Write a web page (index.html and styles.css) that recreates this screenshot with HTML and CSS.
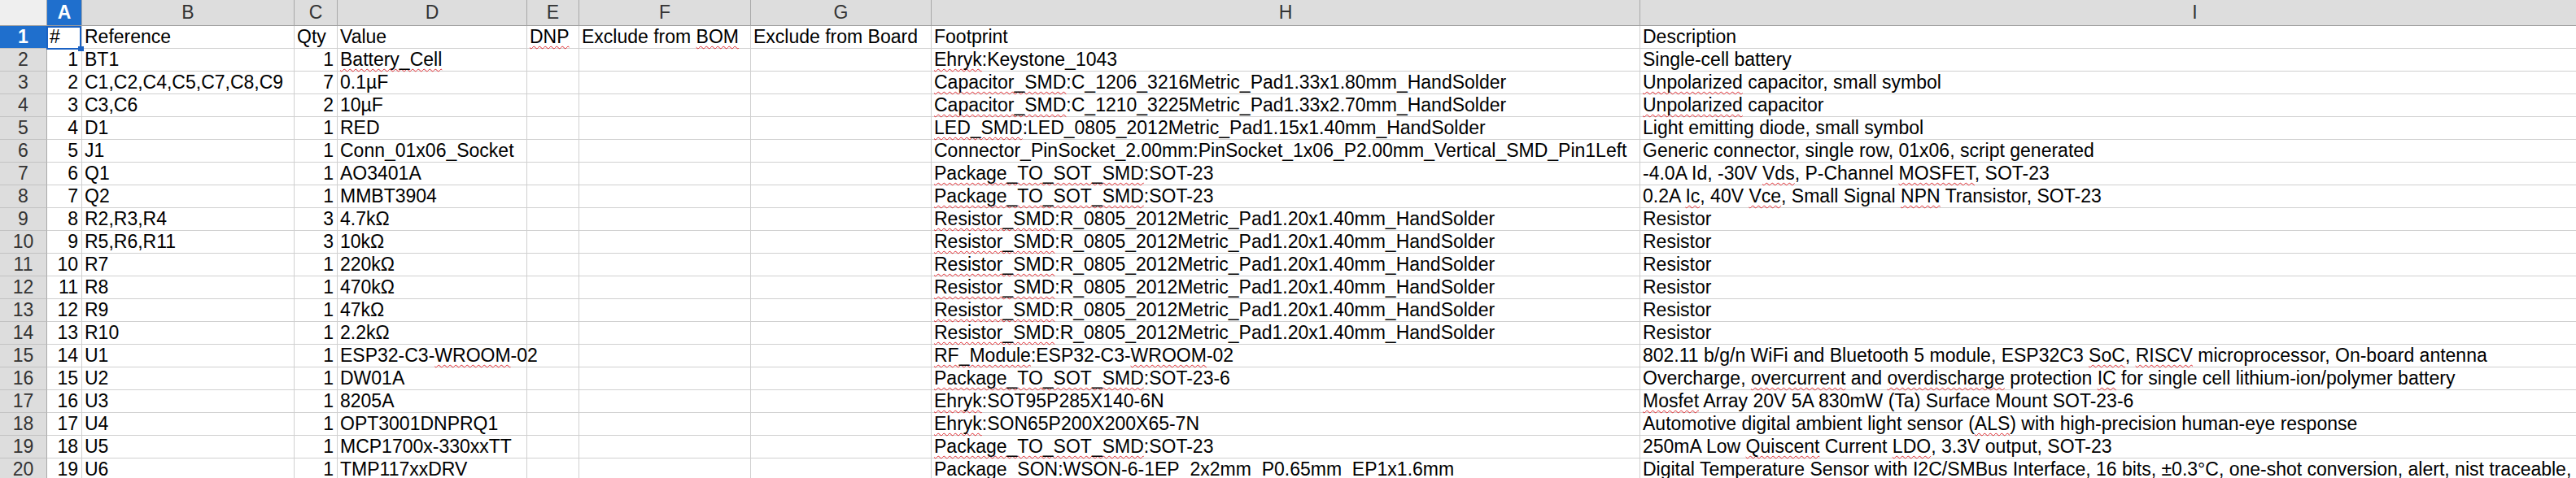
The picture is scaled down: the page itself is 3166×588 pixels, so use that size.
FILE: index.html
```html
<!DOCTYPE html>
<html lang="en">
<head>
    <meta charset="UTF-8">
    <title>bom.csv - LibreOffice Calc</title>
    <link rel="stylesheet" href="styles.css">
</head>
<body>
    <div class="sheet" id="sheet"></div>

    <script>
        const columns = ['A', 'B', 'C', 'D', 'E', 'F', 'G', 'H', 'I'];

        // words wrapped in ~ ~ get the spell checker squiggle
        const rows = [
            ['#', 'Reference', 'Qty', 'Value', '~DNP~', 'Exclude from ~BOM~', 'Exclude from Board', 'Footprint', 'Description'],
            ['1', 'BT1', '1', '~Battery_Cell~', '', '', '', '~Ehryk~:Keystone_1043', 'Single-cell battery'],
            ['2', 'C1,C2,C4,C5,C7,C8,C9', '7', '0.1µF', '', '', '', '~Capacitor_SMD~:C_1206_3216Metric_Pad1.33x1.80mm_HandSolder', '~Unpolarized~ capacitor, small symbol'],
            ['3', 'C3,C6', '2', '10µF', '', '', '', '~Capacitor_SMD~:C_1210_3225Metric_Pad1.33x2.70mm_HandSolder', '~Unpolarized~ capacitor'],
            ['4', 'D1', '1', 'RED', '', '', '', '~LED_SMD~:LED_0805_2012Metric_Pad1.15x1.40mm_HandSolder', 'Light emitting diode, small symbol'],
            ['5', 'J1', '1', 'Conn_01x06_Socket', '', '', '', 'Connector_PinSocket_2.00mm:PinSocket_1x06_P2.00mm_Vertical_SMD_Pin1Left', 'Generic connector, single row, 01x06, script generated'],
            ['6', 'Q1', '1', 'AO3401A', '', '', '', '~Package_TO_SOT_SMD~:SOT-23', '-4.0A Id, -30V ~Vds~, P-Channel ~MOSFET~, SOT-23'],
            ['7', 'Q2', '1', 'MMBT3904', '', '', '', '~Package_TO_SOT_SMD~:SOT-23', '0.2A ~Ic~, 40V ~Vce~, Small Signal ~NPN~ Transistor, SOT-23'],
            ['8', 'R2,R3,R4', '3', '4.7kΩ', '', '', '', '~Resistor_SMD~:R_0805_2012Metric_Pad1.20x1.40mm_HandSolder', 'Resistor'],
            ['9', 'R5,R6,R11', '3', '10kΩ', '', '', '', '~Resistor_SMD~:R_0805_2012Metric_Pad1.20x1.40mm_HandSolder', 'Resistor'],
            ['10', 'R7', '1', '220kΩ', '', '', '', '~Resistor_SMD~:R_0805_2012Metric_Pad1.20x1.40mm_HandSolder', 'Resistor'],
            ['11', 'R8', '1', '470kΩ', '', '', '', '~Resistor_SMD~:R_0805_2012Metric_Pad1.20x1.40mm_HandSolder', 'Resistor'],
            ['12', 'R9', '1', '47kΩ', '', '', '', '~Resistor_SMD~:R_0805_2012Metric_Pad1.20x1.40mm_HandSolder', 'Resistor'],
            ['13', 'R10', '1', '2.2kΩ', '', '', '', '~Resistor_SMD~:R_0805_2012Metric_Pad1.20x1.40mm_HandSolder', 'Resistor'],
            ['14', 'U1', '1', 'ESP32-C3-~WROOM~-02', '', '', '', '~RF_Module~:ESP32-C3-~WROOM~-02', '802.11 b/g/n WiFi and Bluetooth 5 module, ESP32C3 ~SoC~, ~RISCV~ microprocessor, On-board antenna'],
            ['15', 'U2', '1', 'DW01A', '', '', '', '~Package_TO_SOT_SMD~:SOT-23-6', 'Overcharge, ~overcurrent~ and ~overdischarge~ protection ~IC~ for single cell lithium-ion/polymer battery'],
            ['16', 'U3', '1', '8205A', '', '', '', '~Ehryk~:SOT95P285X140-6N', '~Mosfet~ Array 20V 5A 830mW (Ta) Surface Mount SOT-23-6'],
            ['17', 'U4', '1', 'OPT3001DNPRQ1', '', '', '', '~Ehryk~:SON65P200X200X65-7N', 'Automotive digital ambient light sensor (~ALS~) with high-precision human-eye response'],
            ['18', 'U5', '1', 'MCP1700x-330xxTT', '', '', '', '~Package_TO_SOT_SMD~:SOT-23', '250mA Low ~Quiscent~ Current ~LDO~, 3.3V output, SOT-23'],
            ['19', 'U6', '1', 'TMP117xxDRV', '', '', '', '~Package_SON~:WSON-6-1EP_2x2mm_P0.65mm_EP1x1.6mm', 'Digital Temperature Sensor with I2C/~SMBus~ Interface, 16 bits, ±0.3°C, one-shot conversion, alert, ~nist~ traceable,']
        ];

        document.addEventListener('DOMContentLoaded', () => {
            renderSheet();
        });

        function markSpelling(text) {
            return text.replace(/~([^~]+)~/g, '<span class="spell">$1</span>');
        }

        function renderSheet() {
            const sheet = document.getElementById('sheet');
            let html = '<div class="corner"></div>';

            columns.forEach((col, i) => {
                html += `<div class="col-head${i === 0 ? ' active' : ''}">${col}</div>`;
            });

            rows.forEach((row, r) => {
                html += `<div class="row-head${r === 0 ? ' active' : ''}">${r + 1}</div>`;
                row.forEach((value, c) => {
                    const classes = ['cell'];
                    if (/^\d+$/.test(value)) classes.push('num');
                    if (r === 0 && c === 0) classes.push('cursor');
                    html += `<div class="${classes.join(' ')}">${markSpelling(value)}</div>`;
                });
            });

            sheet.innerHTML = html;
        }
    </script>
</body>
</html>
```

FILE: styles.css
```css
:root {
    --head-bg: #dddddd;
    --corner-bg: #efefef;
    --head-line: #a9a9a9;
    --grid: #d0d0d0;
    --active: #1f6fcd;
    --cursor: #1a62c4;
    --text: #000000;
}

* {
    box-sizing: border-box;
}

body {
    margin: 0;
    overflow: hidden;
    background: #ffffff;
    font-family: 'Liberation Sans', Arial, sans-serif;
    font-size: 23px;
    color: var(--text);
}

.sheet {
    display: grid;
    grid-template-columns: 58px 43px 261px 53px 233px 64px 211px 222px 871px 1364px;
    grid-template-rows: 32px;
    grid-auto-rows: 28px;
    width: max-content;
}

.corner {
    background: var(--corner-bg);
    border-right: 1px solid var(--head-line);
    border-bottom: 1px solid #9c9c9c;
}

.col-head {
    background: var(--head-bg);
    color: #333333;
    text-align: center;
    line-height: 31px;
    border-right: 1px solid var(--head-line);
    border-bottom: 1px solid #9c9c9c;
}

.row-head {
    background: var(--head-bg);
    color: #333333;
    text-align: center;
    line-height: 27px;
    border-right: 1px solid var(--head-line);
    border-bottom: 1px solid #c2c2c2;
}

.col-head.active,
.row-head.active {
    background: var(--active);
    color: #ffffff;
    font-weight: bold;
}

/* text spills into the empty cell on its right, as in Calc */
.cell {
    padding: 0 3px;
    line-height: 27px;
    white-space: nowrap;
    border-right: 1px solid var(--grid);
    border-bottom: 1px solid var(--grid);
}

.cell.num {
    text-align: right;
    padding-right: 4px;
}

/* cell cursor on A1 with the fill handle */
.cell.cursor {
    position: relative;
}

.cell.cursor::after {
    content: '';
    position: absolute;
    left: -1px;
    top: 0;
    right: 0;
    bottom: -2px;
    border: 2px solid var(--cursor);
}

.cell.cursor::before {
    content: '';
    position: absolute;
    right: -3px;
    bottom: -4px;
    width: 7px;
    height: 6px;
    background: var(--cursor);
    z-index: 1;
}

.spell {
    text-decoration: underline wavy #e0262c;
    text-decoration-thickness: 1px;
    text-underline-offset: 3px;
    text-decoration-skip-ink: none;
}
```
